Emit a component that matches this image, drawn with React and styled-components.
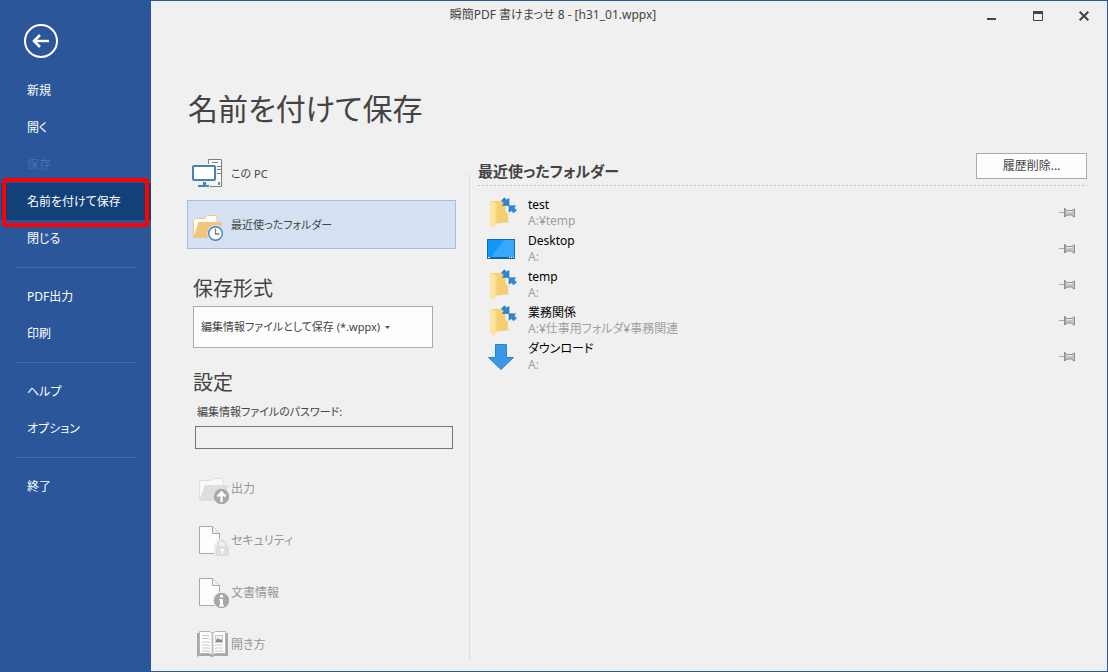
import React from "react"
import { useState } from "react"
import styled, { createGlobalStyle } from "styled-components"

const GlobalStyle=createGlobalStyle`
*{
box-sizing:border-box;
}
body{
margin:0;
background:#f0f0f0;
color:#444444;
font-family:"Noto Sans","Noto Sans CJK JP",sans-serif;
font-size:12px;
line-height:16px;
font-feature-settings:"palt";
}
button,input,select{
font:inherit;
font-feature-settings:inherit;
color:inherit;
margin:0;
}
button{
cursor:pointer;
}
`;

const Window=styled.div`
display:grid;
grid-template-columns:151px 1fr;
min-height:100vh;
border:1px solid #2b579a;
border-left:none;
`;

const Sidebar=styled.nav`
background:#2b579a;
display:flex;
flex-direction:column;
padding-top:23px;
`;

const BackBtn=styled.button`
width:34px;
height:34px;
margin:0 0 14px 24px;
padding:0;
border:2px solid #ffffff;
border-radius:50%;
background:transparent;
color:#ffffff;
display:flex;
align-items:center;
justify-content:center;
`;

const MenuBtn=styled.button`
position:relative;
height:37px;
margin-left:1px;
padding:0 0 0 26px;
border:none;
text-align:left;
background:${(props)=>props.$active?"#124078":"transparent"};
color:${(props)=>props.disabled?"#4470b5":"#ffffff"};
`;

const ActiveFrame=styled.span`
position:absolute;
top:-5px;
right:2px;
bottom:-7px;
left:1px;
border:4px solid #ff0000;
border-radius:4px;
pointer-events:none;
`;

const MenuLine=styled.hr`
width:120px;
height:1px;
margin:10px 0 10px 16px;
border:none;
background:#3e6db5;
`;

const Main=styled.main`
display:flex;
flex-direction:column;
min-width:0;
`;

const TitleBar=styled.header`
display:flex;
height:30px;
`;

const WindowTitle=styled.div`
flex:1;
padding:6px 14px 0 0;
text-align:center;
`;

const WindowBtn=styled.button`
width:46px;
padding:0;
border:none;
background:transparent;
display:flex;
align-items:center;
justify-content:center;
`;

const PageTitle=styled.h1`
margin:54px 0 0 37px;
font-size:30px;
line-height:48px;
font-weight:400;
`;

const Body=styled.div`
display:grid;
grid-template-columns:269px 1px 1fr;
flex:1;
padding:16px 20px 0 36px;
`;

const LeftColumn=styled.section`
display:flex;
flex-direction:column;
`;

const Divider=styled.div`
margin:25px 0 12px 13px;
width:1px;
background:#dcdcdc;
`;

const RightColumn=styled.section`
margin-left:21px;
min-width:0;
`;

const PlaceBtn=styled.button`
display:flex;
align-items:center;
gap:8px;
height:49px;
margin-bottom:2px;
padding:0 3px;
font-size:11px;
text-align:left;
border:1px solid ${(props)=>props.$active?"#a3bde3":"transparent"};
background:${(props)=>props.$active?"#d5e1f2":"transparent"};
`;

const SectionTitle=styled.h2`
margin:${(props)=>props.$top}px 0 0 6px;
font-size:20px;
line-height:30px;
font-weight:400;
`;

const ComboBox=styled.div`
display:grid;
width:240px;
height:42px;
margin:2px 0 0 6px;
align-items:center;
`;

const Combo=styled.select`
grid-area:1/1;
width:100%;
height:100%;
padding:0 7px;
appearance:none;
border:1px solid #ababab;
border-radius:0;
background:#fdfdfd;
font-size:11px;
`;

const ComboArrow=styled.svg`
grid-area:1/1;
justify-self:start;
margin-left:192px;
pointer-events:none;
`;

const PasswordLabel=styled.label`
margin:6px 0 0 10px;
font-size:11px;
`;

const PasswordInput=styled.input`
height:23px;
margin:6px 3px 14px 8px;
padding:0 4px;
border:1px solid #767676;
border-radius:0;
background:#f0f0f0;
`;

const ActionBtn=styled.button`
display:flex;
align-items:center;
gap:2px;
height:52px;
padding:0 0 0 10px;
border:none;
background:transparent;
color:#969696;
text-align:left;
`;

const ListHeader=styled.div`
display:flex;
align-items:flex-start;
justify-content:space-between;
height:33px;
padding-top:4px;
`;

const ListTitle=styled.h2`
margin:8px 0 0;
font-size:15px;
line-height:20px;
font-weight:700;
`;

const ClearBtn=styled.button`
width:111px;
height:26px;
padding:0;
border:1px solid #ababab;
background:#fdfdfd;
`;

const DashLine=styled.div`
height:1px;
margin:3px 0 9px;
background:repeating-linear-gradient(90deg,#c3c3c3 0 2px,transparent 2px 4px);
`;

const FolderList=styled.ul`
margin:0;
padding:0;
list-style:none;
`;

const FolderRow=styled.li`
display:flex;
align-items:center;
height:36px;
padding-right:12px;
`;

const FolderBtn=styled.button`
flex:1;
display:flex;
align-items:center;
gap:10px;
padding:0 0 0 8px;
border:none;
background:transparent;
text-align:left;
`;

const FolderTxt=styled.span`
display:flex;
flex-direction:column;
`;

const FolderName=styled.span`
color:#000000;
`;

const FolderPath=styled.span`
color:#a0a0a0;
`;

const PinBtn=styled.button`
padding:0;
border:none;
background:transparent;
display:flex;
`;

const BackArrow=()=>(
    <svg width="20" height="16" viewBox="0 0 20 16" fill="none" stroke="currentColor">
        <path d="M2.5 8H18" strokeWidth="2.4" />
        <path d="M9 2L3 8l6 6" strokeWidth="2.6" />
    </svg>
)

const PcIcon=()=>(
    <svg width="32" height="32" viewBox="0 0 32 32">
        <path d="M17.5 6V1.5h13v27H19" fill="#fafafa" stroke="#7f7f7f" />
        <path d="M17 7h9v21h-9z" fill="#f5f5f5" />
        <path d="M21 4.5h6M26 8.5h4M26 11.5h4M26 15.5h4" stroke="#7f7f7f" />
        <path d="M27 24h2v3h-2z" fill="#5e9c83" />
        <rect x="2" y="8" width="22" height="14" rx="1" fill="#ffffff" stroke="#4a7fb8" strokeWidth="2" />
        <path d="M12 24h3v3h3v2H7v-2h5z" fill="#4a7fb8" />
    </svg>
)

const RecentFolderIcon=()=>(
    <svg width="32" height="32" viewBox="0 0 32 32">
        <path d="M2.500 28V11.500l2-2h9l2.500-3h8.500l1.500 1.500V14" fill="#ffffff" stroke="#eec77d" />
        <path d="M7.500 13H31.500L26 29H2z" fill="#eec77d" />
        <circle cx="24.500" cy="24.500" r="8.500" fill="#d5e1f2" />
        <circle cx="24.500" cy="24.500" r="6.800" fill="#ffffff" stroke="#4a7fb8" strokeWidth="1.400" />
        <path d="M24.500 19.500v5.500h4" fill="none" stroke="#7a7a7a" strokeWidth="1.300" />
    </svg>
)

const OutputIcon=()=>(
    <svg width="32" height="32" viewBox="0 0 32 32">
        <path d="M2.500 27V9l1-1.500h10L16 5.500h8.500l1.500 1.500v6" fill="#f9f9f9" stroke="#dedede" />
        <path d="M8 12H31.500L27 28H2z" fill="#dedede" />
        <circle cx="24.500" cy="23.500" r="7.700" fill="#a8a8a8" />
        <path d="M24.500 29v-9M20.500 23.500l4-4 4 4" fill="none" stroke="#ffffff" strokeWidth="2.400" />
    </svg>
)

const DocShape=()=>(
    <>
        <path d="M2.500 1.500h13l7 7v20h-20z" fill="#fdfdfd" stroke="#a8a8a8" />
        <path d="M15.500 1.500v7h7" fill="#f0f0f0" stroke="#a8a8a8" />
    </>
)

const SecurityIcon=()=>(
    <svg width="32" height="32" viewBox="0 0 32 32">
        <DocShape />
        <path d="M17 20l3-6h12v17H17z" fill="#f0f0f0" />
        <path d="M21 22v-2.500a4 4 0 0 1 8 0V22" fill="none" stroke="#dedede" strokeWidth="2" />
        <path d="M18.500 21H32v10H18.500z" fill="#dedede" />
        <path d="M25.200 26v3.500" stroke="#ffffff" strokeWidth="1.200" />
        <circle cx="25.200" cy="25" r="1.500" fill="#ffffff" />
    </svg>
)

const DocInfoIcon=()=>(
    <svg width="32" height="32" viewBox="0 0 32 32">
        <DocShape />
        <circle cx="24.500" cy="23.500" r="8.700" fill="#f0f0f0" />
        <circle cx="24.500" cy="23.500" r="7.700" fill="#a8a8a8" />
        <path d="M23 18h3v2.500h-3zM22 22h4v6h1v1.500h-5V28h1v-4.500h-1z" fill="#ffffff" />
    </svg>
)

const OpenStyleIcon=()=>(
    <svg width="32" height="32" viewBox="0 0 32 32">
        <path d="M0 4h31v23H17l-1 1h-2l-1-1H1v1H0z" fill="#a8a8a8" />
        <path d="M2.500 2.500h10l3 1.500 3-1.500h10v22h-10l-3 1.500-3-1.500h-10z" fill="#ffffff" stroke="#b4b4b4" />
        <path d="M15.500 4v22" stroke="#c0c0c0" strokeWidth="2" />
        <path d="M5 6.500h7l1 1M5 9.500h7l1 1M5 13h7l1 1M5 16h7l1 1M5 19h7l1 1M5 22h7l1 1M18 17l1-1h7M18 20l1-1h7M18 23l1-1h7" fill="none" stroke="#c6c6c6" />
        <rect x="18.500" y="6.500" width="7" height="7" fill="#f2f2f2" stroke="#c8c8c8" />
        <path d="M19 13v-2l2-2 2 2 1-1 1 1v2z" fill="#8c8c8c" />
    </svg>
)

const LinkedFolderIcon=()=>(
    <svg width="32" height="32" viewBox="0 0 32 32">
        <path d="M9 27l13-1 2-.5-2-3-12 2z" fill="#e2e2e2" />
        <path d="M4.500 4H19.500V14.500L22 17v8L9 26.500z" fill="#f3cf72" />
        <path d="M4 3.500l6 2.500v20l-1.500 5L4 28.500z" fill="#fde39d" />
        <path d="M10 6l-.2 20" stroke="#f9d985" strokeWidth="1.500" />
        <path d="M15.500 3.500L18.500 .8l2.200 2.200L23 1.500V8.500H16.500l1.500-2.300z" fill="#2f86d3" stroke="#2070b5" strokeWidth=".6" />
        <path d="M30.500 13.200l-3 2.600-2.200-2.200L23 15.200V8.800h6.500L28 11z" fill="#2f86d3" stroke="#2070b5" strokeWidth=".6" />
    </svg>
)

const DesktopIcon=()=>(
    <svg width="32" height="32" viewBox="0 0 32 32">
        <rect x="1.500" y="6.500" width="27" height="19" fill="#0f97fb" stroke="#0e6cb5" />
        <path d="M18 7h10v17H5z" fill="#36a9fd" />
        <path d="M2 24h26v1.500H2z" fill="#0d62a6" />
        <path d="M2 24.500h2M23 24.500h1M25 24.500h1M27 24.500h1" stroke="#ffffff" />
    </svg>
)

const DownloadIcon=()=>(
    <svg width="32" height="32" viewBox="0 0 32 32">
        <path d="M9.500 3.500h11v13h7L15 28.500 2.500 16.500h7z" fill="#3b98e6" stroke="#2b83d0" />
    </svg>
)

const PinIcon=()=>(
    <svg width="16" height="10" viewBox="0 0 16 10">
        <path d="M0 4.500h5" stroke="#a8a8a8" />
        <path d="M5.500 0v9" stroke="#8f8f8f" />
        <path d="M6 .5l2 2h5l1.500-1.500h1v8h-1L13 7H8L6 9z" fill="#c3c3c8" stroke="#8f8f8f" />
        <path d="M8 3.500h5" stroke="#f0f0f4" />
    </svg>
)

const menuData=[
    { id:'new', label:"新規" },
    { id:'open', label:"開く" },
    { id:'save', label:"保存", disabled:true },
    { id:'saveas', label:"名前を付けて保存" },
    { id:'close', label:"閉じる" },
    { id:'line1' },
    { id:'pdf', label:"PDF出力" },
    { id:'print', label:"印刷" },
    { id:'line2' },
    { id:'help', label:"ヘルプ" },
    { id:'option', label:"オプション" },
    { id:'line3' },
    { id:'exit', label:"終了" }
]

const placeData=[
    { id:'pc', label:"この PC", icon:<PcIcon /> },
    { id:'recent', label:"最近使ったフォルダー", icon:<RecentFolderIcon /> }
]

const actionData=[
    { id:'output', label:"出力", icon:<OutputIcon /> },
    { id:'security', label:"セキュリティ", icon:<SecurityIcon /> },
    { id:'info', label:"文書情報", icon:<DocInfoIcon /> },
    { id:'openstyle', label:"開き方", icon:<OpenStyleIcon /> }
]

const folderData=[
    { id:1, name:"test", path:"A:¥temp", icon:<LinkedFolderIcon /> },
    { id:2, name:"Desktop", path:"A:", icon:<DesktopIcon /> },
    { id:3, name:"temp", path:"A:", icon:<LinkedFolderIcon /> },
    { id:4, name:"業務関係", path:"A:¥仕事用フォルダ¥事務関連", icon:<LinkedFolderIcon /> },
    { id:5, name:"ダウンロード", path:"A:", icon:<DownloadIcon /> }
]

const App=()=>{
    const [getMenu,setMenu]=useState("saveas");
    const [getPlace,setPlace]=useState("recent");
    const [getPassword,setPassword]=useState("");

    return(
        <Window>
            <GlobalStyle />
            <Sidebar>
                <BackBtn aria-label="戻る"><BackArrow /></BackBtn>
                {
                menuData.map((data)=>(
                    data.label
                    ? <MenuBtn key={data.id} disabled={data.disabled} $active={getMenu===data.id} onClick={()=>{setMenu(data.id)}}>
                        {data.label}
                        {getMenu===data.id && <ActiveFrame />}
                    </MenuBtn>
                    : <MenuLine key={data.id} />
                ))
                }
            </Sidebar>
            <Main>
                <TitleBar>
                    <WindowTitle>瞬簡PDF 書けまっせ 8 - [h31_01.wppx]</WindowTitle>
                    <WindowBtn aria-label="最小化">
                        <svg width="10" height="12" viewBox="0 0 10 12"><path d="M0 8h9v2H0z" fill="#444444" /></svg>
                    </WindowBtn>
                    <WindowBtn aria-label="最大化">
                        <svg width="10" height="10" viewBox="0 0 10 10"><path d="M.5 1.500h9v8h-9z" fill="none" stroke="#444444" /><path d="M0 0h10v3H0z" fill="#444444" /></svg>
                    </WindowBtn>
                    <WindowBtn aria-label="閉じる">
                        <svg width="10" height="10" viewBox="0 0 10 10"><path d="M.7.7l8.600 8.600M9.300.7L.7 9.300" stroke="#444444" strokeWidth="2" /></svg>
                    </WindowBtn>
                </TitleBar>
                <PageTitle>名前を付けて保存</PageTitle>
                <Body>
                    <LeftColumn>
                        {
                        placeData.map((data)=>(
                            <PlaceBtn key={data.id} $active={getPlace===data.id} onClick={()=>{setPlace(data.id)}}>{data.icon}{data.label}</PlaceBtn>
                        ))
                        }
                        <SectionTitle $top={23}>保存形式</SectionTitle>
                        <ComboBox>
                            <Combo aria-label="保存形式">
                                <option>編集情報ファイルとして保存 (*.wppx)</option>
                            </Combo>
                            <ComboArrow width="5" height="3" viewBox="0 0 5 3"><path d="M0 0h5L2.500 3z" fill="#555555" /></ComboArrow>
                        </ComboBox>
                        <SectionTitle $top={20}>設定</SectionTitle>
                        <PasswordLabel htmlFor="password">編集情報ファイルのパスワード:</PasswordLabel>
                        <PasswordInput id="password" type="password" value={getPassword} onChange={(e)=>{setPassword(e.target.value)}} />
                        {
                        actionData.map((data)=>(
                            <ActionBtn key={data.id} disabled>{data.icon}{data.label}</ActionBtn>
                        ))
                        }
                    </LeftColumn>
                    <Divider />
                    {/* recent folder section */}
                    <RightColumn>
                        <ListHeader>
                            <ListTitle>最近使ったフォルダー</ListTitle>
                            <ClearBtn>履歴削除...</ClearBtn>
                        </ListHeader>
                        <DashLine />
                        <FolderList>
                            {
                            folderData.map((data)=>(
                                <FolderRow key={data.id}>
                                    <FolderBtn>
                                        {data.icon}
                                        <FolderTxt>
                                            <FolderName>{data.name}</FolderName>
                                            <FolderPath>{data.path}</FolderPath>
                                        </FolderTxt>
                                    </FolderBtn>
                                    <PinBtn aria-label="ピン留め"><PinIcon /></PinBtn>
                                </FolderRow>
                            ))
                            }
                        </FolderList>
                    </RightColumn>
                </Body>
            </Main>
        </Window>
    )
}

export default App;
